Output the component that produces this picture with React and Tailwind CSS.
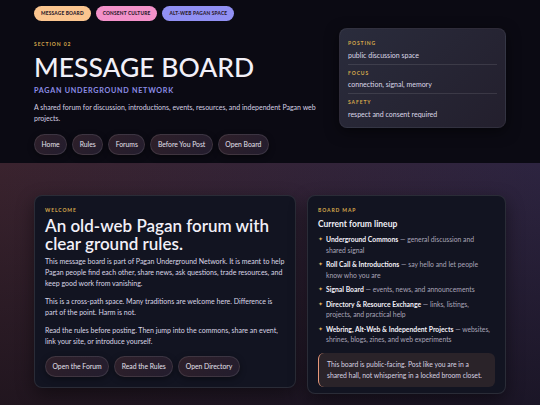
import React from 'react';

const tags = [
  { label: 'Message Board', bg: 'bg-[#fbc58f]' },
  { label: 'Consent Culture', bg: 'bg-[#f391c9]' },
  { label: 'Alt-Web Pagan Space', bg: 'bg-[#9190f3]' },
];

const nav = ['Home', 'Rules', 'Forums', 'Before You Post', 'Open Board'];

const facts = [
  { label: 'Posting', value: 'public discussion space' },
  { label: 'Focus', value: 'connection, signal, memory' },
  { label: 'Safety', value: 'respect and consent required' },
];

const boards = [
  { name: 'Underground Commons', desc: 'general discussion and shared signal' },
  { name: 'Roll Call & Introductions', desc: 'say hello and let people know who you are' },
  { name: 'Signal Board', desc: 'events, news, and announcements' },
  { name: 'Directory & Resource Exchange', desc: 'links, listings, projects, and practical help' },
  { name: 'Webring, Alt-Web & Independent Projects', desc: 'websites, shrines, blogs, zines, and web experiments' },
];

function Kicker({ children }) {
  return (
    <div className="text-[5px] font-bold uppercase tracking-[0.18em] text-[#d6a94c]">{children}</div>
  );
}

function Pill({ children }) {
  return (
    <a className="flex h-[21px] items-center rounded-full border border-white/10 bg-[linear-gradient(135deg,#2e1f29,#231d2e)] px-[6.5px] text-[6.8px] text-[#e4e0ec] shadow-[0_2px_6px_rgba(0,0,0,0.4)]">
      {children}
    </a>
  );
}

export default function App() {
  return (
    <div className="min-h-[405px] w-[540px] overflow-hidden bg-[#0b0a13] font-['Lato','Liberation_Sans',sans-serif] text-[#d8d4e4] antialiased">
      {/* Hero */}
      <header className="h-[163px] px-[34px] pt-[6px]">
        <div className="flex gap-[5px]">
          {tags.map(t => (
            <span
              key={t.label}
              className={`${t.bg} flex h-[15px] items-center rounded-full px-[7px] text-[4.8px] font-black uppercase tracking-[0.04em] text-[#2b1b2c]`}
            >
              {t.label}
            </span>
          ))}
        </div>

        <div className="mt-[7px] flex justify-between">
          <div className="w-[290px]">
            <div className="mt-[13px]">
              <Kicker>Section 02</Kicker>
            </div>
            <h1 className="mt-[2px] text-[26.5px] font-medium leading-[32px] text-[#f2f0f8]">MESSAGE BOARD</h1>
            <div className="mt-[3px] text-[7.2px] font-bold uppercase tracking-[0.1em] text-[#8d8de6]">Pagan Underground Network</div>
            <p className="mt-[6px] text-[7px] leading-[11px] text-[#d4d0e2]">
              A shared forum for discussion, introductions, events, resources, and independent Pagan web projects.
            </p>
          </div>

          <div className="h-[100px] w-[167px] rounded-[8px] border border-white/5 bg-[linear-gradient(135deg,#2a2c3c,#231f2d)] px-[8px] pt-[11px] shadow-[0_4px_14px_rgba(0,0,0,0.5)]">
            {facts.map((f, i) => (
              <div key={f.label} className={i > 0 ? 'mt-[4px] border-t border-white/10 pt-[5px]' : ''}>
                <Kicker>{f.label}</Kicker>
                <div className="mt-[2px] text-[7px] leading-[10px] text-[#dcd8e8]">{f.value}</div>
              </div>
            ))}
          </div>
        </div>

        <nav className="mt-[6px] flex gap-[5px]">
          {nav.map(n => (
            <Pill key={n}>{n}</Pill>
          ))}
        </nav>
      </header>

      {/* Main */}
      <main className="h-[242px] bg-[linear-gradient(180deg,rgba(12,10,18,0)_0%,rgba(12,10,18,0.55)_100%),linear-gradient(90deg,#3a232e,#2d2440)] px-[34px] pt-[32px]">
        <div className="grid grid-cols-[262px_199px] items-start gap-[11px]">
          <section className="h-[193px] rounded-[8px] border border-white/10 bg-[#121421] px-[10px] pt-[11px] shadow-[0_6px_18px_rgba(0,0,0,0.45)]">
            <Kicker>Welcome</Kicker>
            <h2 className="mt-[2px] text-[17px] font-semibold leading-[18px] text-[#f2f0f8]">
              An old-web Pagan forum with clear ground rules.
            </h2>
            <p className="mt-[3px] text-[7px] leading-[11px] text-[#dad6e6]">
              This message board is part of Pagan Underground Network. It is meant to help Pagan people find each other, share news, ask questions, trade resources, and keep good work from vanishing.
            </p>
            <p className="mt-[7px] text-[7px] leading-[11px] text-[#dad6e6]">
              This is a cross-path space. Many traditions are welcome here. Difference is part of the point. Harm is not.
            </p>
            <p className="mt-[7px] text-[7px] leading-[11px] text-[#dad6e6]">
              Read the rules before posting. Then jump into the commons, share an event, link your site, or introduce yourself.
            </p>
            <div className="mt-[9px] flex gap-[5px]">
              <Pill>Open the Forum</Pill>
              <Pill>Read the Rules</Pill>
              <Pill>Open Directory</Pill>
            </div>
          </section>

          <section className="h-[199px] rounded-[8px] border border-white/10 bg-[#121421] px-[10px] pt-[11px] shadow-[0_6px_18px_rgba(0,0,0,0.45)]">
            <Kicker>Board Map</Kicker>
            <h3 className="mt-[3px] text-[8.5px] font-bold text-[#f0eef6]">Current forum lineup</h3>
            <ul className="mt-[4px] flex flex-col gap-[4px]">
              {boards.map(b => (
                <li key={b.name} className="flex gap-[3px] text-[6.8px] leading-[10.5px]">
                  <span className="text-[6px] text-[#e0b35a]">✦</span>
                  <span className="text-[#a9a5b8]">
                    <b className="font-bold text-[#f2f0f8]">{b.name}</b> — {b.desc}
                  </span>
                </li>
              ))}
            </ul>
            <div className="mt-[8px] rounded-[6px] border-l-[1.5px] border-[#e6977a] bg-[#2a2329] px-[8px] py-[6px] text-[6.8px] leading-[11px] text-[#d6d2e0]">
              This board is public-facing. Post like you are in a shared hall, not whispering in a locked broom closet.
            </div>
          </section>
        </div>
      </main>
    </div>
  );
}
